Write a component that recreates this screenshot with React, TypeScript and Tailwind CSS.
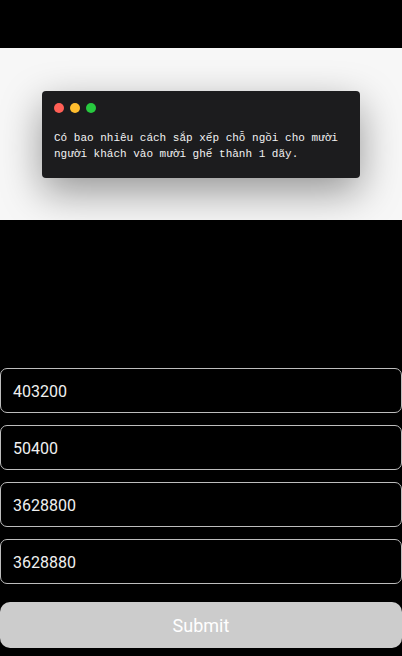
const options = ['403200', '50400', '3628800', '3628880'];

const App = () => (
  <div className="w-[402px] h-[656px] bg-black flex flex-col overflow-hidden" style={{ fontFamily: 'Roboto, "Noto Sans", sans-serif' }}>
    {/* question image */}
    <div className="mt-[48px] h-[172px] bg-[#f7f7f7] flex items-center justify-center">
      <div className="w-[318px] h-[87px] bg-[#1c1c1e] rounded-[4px] px-[12px] pt-[12px] shadow-[0_14px_40px_rgba(0,0,0,0.4)]">
        <div className="flex gap-[6px]">
          <span className="size-[10px] rounded-full bg-[#ff5f56]" />
          <span className="size-[10px] rounded-full bg-[#ffbd2e]" />
          <span className="size-[10px] rounded-full bg-[#27c93f]" />
        </div>
        <p className="mt-[17px] text-[11px] leading-[16px] text-[#f2f2f2]" style={{ fontFamily: '"Liberation Mono", "DejaVu Sans Mono", monospace' }}>
          Có bao nhiêu cách sắp xếp chỗ ngồi cho mười<br />
          người khách vào mười ghế thành 1 dãy.
        </p>
      </div>
    </div>

    {/* answers */}
    <div className="mt-[148px] flex flex-col gap-[12px]">
      {options.map((o) => (
        <div key={o} className="h-[45px] border border-[#bdbdbd] rounded-[7px] flex items-center px-[12px] pt-[2px] text-[16px] text-[#f0f0f0]">
          {o}
        </div>
      ))}
    </div>

    <button className="mt-[18px] h-[46px] w-full rounded-[10px] bg-[#cccccc] text-white text-[18px]">
      Submit
    </button>
  </div>
);

export default App;
